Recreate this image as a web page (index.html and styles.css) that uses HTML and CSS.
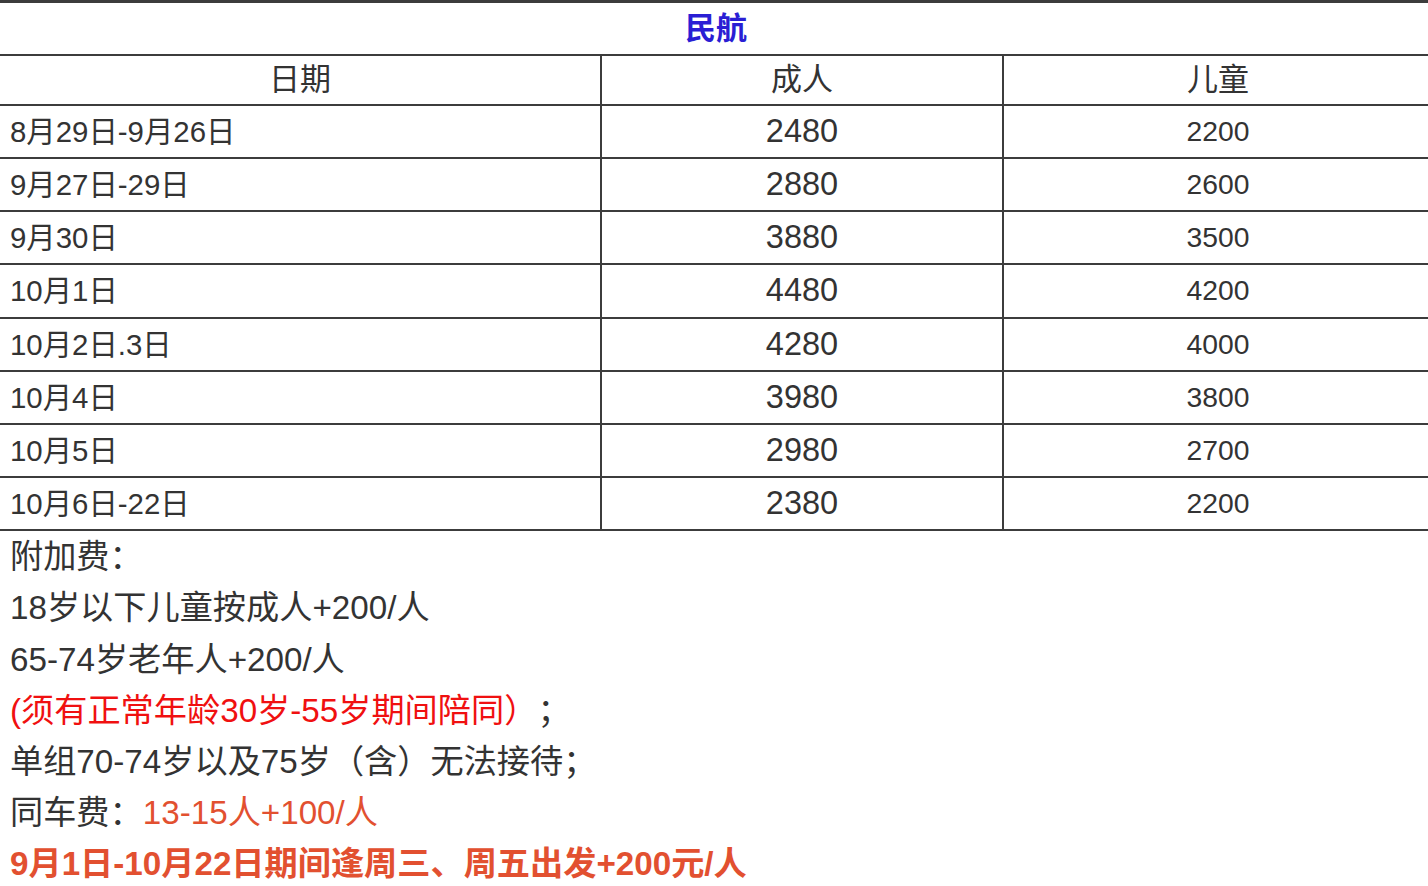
FILE: index.html
```html
<!DOCTYPE html>
<html lang="zh-CN">
<head>
<meta charset="utf-8">
<title>民航价格</title>
<link rel="stylesheet" href="styles.css">
</head>
<body>
<table class="price">
  <colgroup>
    <col class="c1">
    <col class="c2">
    <col class="c3">
  </colgroup>
  <tr class="title-row"><td colspan="3" class="title">民航</td></tr>
  <tr class="head-row"><td class="b">日期</td><td class="b">成人</td><td>儿童</td></tr>
  <tr><td class="date b">8月29日-9月26日</td><td class="adult b">2480</td><td class="child">2200</td></tr>
  <tr><td class="date b">9月27日-29日</td><td class="adult b">2880</td><td class="child">2600</td></tr>
  <tr><td class="date b">9月30日</td><td class="adult b">3880</td><td class="child">3500</td></tr>
  <tr><td class="date b">10月1日</td><td class="adult b">4480</td><td class="child">4200</td></tr>
  <tr><td class="date b">10月2日.3日</td><td class="adult b">4280</td><td class="child">4000</td></tr>
  <tr><td class="date b">10月4日</td><td class="adult b">3980</td><td class="child">3800</td></tr>
  <tr><td class="date b">10月5日</td><td class="adult b">2980</td><td class="child">2700</td></tr>
  <tr><td class="date b">10月6日-22日</td><td class="adult b">2380</td><td class="child">2200</td></tr>
</table>
<div class="notes">
  <p>附加费：</p>
  <p>18岁以下儿童按成人+200/人</p>
  <p>65-74岁老年人+200/人</p>
  <p><span class="red">(须有正常年龄30岁-55岁期间陪同）</span>；</p>
  <p>单组70-74岁以及75岁（含）无法接待；</p>
  <p>同车费：<span class="orange">13-15人+100/人</span></p>
  <p class="strong orange">9月1日-10月22日期间逢周三、周五出发+200元/人</p>
</div>
</body>
</html>
```
FILE: styles.css
```css
html, body {
  margin: 0;
  padding: 0;
  background: #ffffff;
  overflow: hidden;
}
body {
  font-family: "Liberation Sans", "Noto Sans CJK SC", sans-serif;
  color: #333333;
  text-spacing-trim: space-all;
}
.price {
  width: 1432px;
  table-layout: fixed;
  border-collapse: separate;
  border-spacing: 0;
  border-top: 3px solid #3c3c3c;
}
.c1 { width: 602px; }
.c2 { width: 402px; }
.c3 { width: 428px; }
.price td {
  padding: 0;
  border-bottom: 2px solid #3c3c3c;
  text-align: center;
  line-height: 51.15px;
  font-size: 28px;
  white-space: nowrap;
}
.price td.b {
  border-right: 2px solid #3c3c3c;
}
.price .title {
  font-weight: bold;
  font-size: 31px;
  color: #2a1ed4;
  line-height: 51px;
}
.head-row td {
  line-height: 48px;
  font-size: 31px;
}
.price td.date {
  text-align: left;
  padding-left: 10px;
  font-size: 29.4px;
}
.price td.adult {
  font-size: 32.5px;
}
.price td.child {
  font-size: 28.3px;
}
.notes {
  padding-left: 10px;
}
.notes p {
  margin: 0;
  font-size: 33.2px;
  line-height: 51.2px;
  white-space: nowrap;
}
.red { color: #f01010; }
.orange { color: #e25030; }
.strong { font-weight: bold; }
```
